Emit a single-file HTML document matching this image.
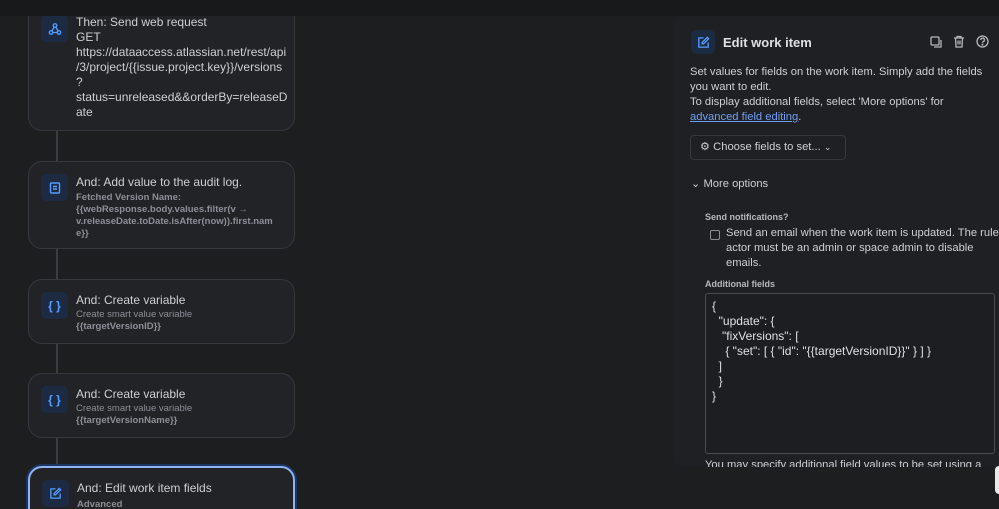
<!DOCTYPE html>
<html><head><meta charset="utf-8"><style>
*{box-sizing:border-box;margin:0;padding:0}
html{width:999px;height:509px;overflow:hidden}
body{width:999px;height:509px;overflow:hidden;background:#1d1e20;font-family:"Liberation Sans",sans-serif;color:#cecfd2;position:relative}
.top{position:absolute;left:0;top:0;width:999px;height:16px;background:#18191b;z-index:5}
.line{position:absolute;left:56px;width:2px;background:#3b3d42}
.card{position:absolute;left:28px;width:267px;background:#222326;border:1px solid #36383d;border-radius:14px}
.ic{position:absolute;left:12px;top:12px;width:27px;height:27px;border-radius:5px;background:#1c2b41;color:#579dff;display:flex;align-items:center;justify-content:center;font-size:12px;font-weight:bold}
.t{position:absolute;left:47px;font-size:12px;color:#cecfd2}
.s{font-size:9.5px;color:#8c8f97;line-height:12px}
.b{font-weight:bold}
.panel{position:absolute;left:673px;top:16px;width:340px;height:451px;background:#1f2023;border-radius:10px;overflow:hidden}
.panel p{font-size:11.2px;line-height:15px;color:#cecfd2}
</style></head><body>
<div class="top"></div>
<div class="line" style="top:130px;height:32px"></div>
<div class="line" style="top:248px;height:32px"></div>
<div class="line" style="top:343px;height:31px"></div>
<div class="line" style="top:437px;height:30px"></div>

<div class="card" style="top:-20px;height:151px">
 <div class="ic" style="top:34px"><svg width="14" height="14" viewBox="0 0 16 16" fill="none" stroke="#579dff" stroke-width="1.5"><circle cx="8" cy="4" r="2"/><circle cx="3.5" cy="12" r="2"/><circle cx="12.5" cy="12" r="2"/><path d="M7 6 4.5 10M5.5 12h5M9 6l2.5 4"/></svg></div>
 <div class="t" style="top:34px;line-height:15px">Then: Send web request<br>GET<br>https://dataaccess.atlassian.net/rest/api<br>/3/project/{{issue.project.key}}/versions<br>?<br>status=unreleased&amp;&amp;orderBy=releaseD<br>ate</div>
</div>

<div class="card" style="top:161px;height:88px">
 <div class="ic"><svg width="12" height="12" viewBox="0 0 12 12" fill="none" stroke="#579dff" stroke-width="1.4"><rect x="1.5" y="1" width="9" height="10" rx="1"/><path d="M4 4.5h4M4 7h4"/></svg></div>
 <div class="t" style="top:13px">And: Add value to the audit log.<div class="s b" style="margin-top:3px">Fetched Version Name:<br>{{webResponse.body.values.filter(v →<br>v.releaseDate.toDate.isAfter(now)).first.nam<br>e}}</div></div>
</div>

<div class="card" style="top:279px;height:65px">
 <div class="ic">{ }</div>
 <div class="t" style="top:13px">And: Create variable<div class="s" style="margin-top:2px">Create smart value variable</div><div class="s b">{{targetVersionID}}</div></div>
</div>

<div class="card" style="top:373px;height:65px">
 <div class="ic">{ }</div>
 <div class="t" style="top:13px">And: Create variable<div class="s" style="margin-top:2px">Create smart value variable</div><div class="s b">{{targetVersionName}}</div></div>
</div>

<div class="card" style="top:466px;height:60px;border:2px solid #8fb4f0;box-shadow:0 0 0 2px #1c3461">
 <div class="ic"><svg width="13" height="13" viewBox="0 0 14 14" fill="none" stroke="#579dff" stroke-width="1.4"><path d="M7 2H2v10h10V7"/><path d="M11 1.5l1.5 1.5L7 8.5H5.5V7z"/></svg></div>
 <div class="t" style="top:13px">And: Edit work item fields<div class="s b" style="margin-top:4px">Advanced</div></div>
</div>

<div class="panel">
 <div style="position:absolute;left:18px;top:14px;width:24px;height:24px;border-radius:5px;background:#1c2b41;display:flex;align-items:center;justify-content:center"><svg width="13" height="13" viewBox="0 0 14 14" fill="none" stroke="#579dff" stroke-width="1.4"><path d="M7 2H2v10h10V7"/><path d="M11 1.5l1.5 1.5L7 8.5H5.5V7z"/></svg></div>
 <div style="position:absolute;left:50px;top:19px;font-size:13px;font-weight:bold;color:#dee0e3">Edit work item</div>
 <svg style="position:absolute;left:257px;top:20px" width="12" height="12" viewBox="0 0 12 12" fill="none" stroke="#b6b8bd" stroke-width="1.3"><rect x="1" y="1" width="8" height="8" rx="1"/><path d="M11 4v7H4"/></svg>
 <svg style="position:absolute;left:280px;top:19px" width="12" height="13" viewBox="0 0 12 13" fill="none" stroke="#b6b8bd" stroke-width="1.3"><path d="M1 3h10M4 3V1.5h4V3M2.5 3l.5 9h6l.5-9M5 5.5v4M7 5.5v4"/></svg>
 <svg style="position:absolute;left:303px;top:19px" width="13" height="13" viewBox="0 0 13 13" fill="none" stroke="#b6b8bd" stroke-width="1.3"><circle cx="6.5" cy="6.5" r="5.5"/><path d="M4.8 5a1.8 1.8 0 1 1 2.4 1.6c-.5.2-.7.6-.7 1.1"/><circle cx="6.5" cy="9.6" r=".4" fill="#b6b8bd"/></svg>
 <p style="position:absolute;left:17px;top:49px;width:296px">Set values for fields on the work item. Simply add the fields you want to edit.<br>To display additional fields, select 'More options' for<br><span style="color:#6f9ff5;text-decoration:underline">advanced field editing</span>.</p>
 <div style="position:absolute;left:17px;top:119px;width:156px;height:25px;border:1px solid #36383d;border-radius:4px;font-size:11.2px;line-height:23px;padding-left:9px;color:#cecfd2">⚙ Choose fields to set... <span style="font-size:9px">⌄</span></div>
 <div style="position:absolute;left:18px;top:161px;font-size:11.2px">⌄ More options</div>
 <div style="position:absolute;left:32px;top:196px;font-size:9px;color:#b6b8bd;font-weight:bold">Send notifications?</div>
 <div style="position:absolute;left:37px;top:214px;width:10px;height:10px;border:1px solid #8c8f97;border-radius:2px"></div>
 <p style="position:absolute;left:53px;top:210px;width:275px">Send an email when the work item is updated. The rule actor must be an admin or space admin to disable emails.</p>
 <div style="position:absolute;left:32px;top:263px;font-size:9px;color:#b6b8bd;font-weight:bold">Additional fields</div>
 <div style="position:absolute;left:32px;top:277px;width:290px;height:161px;border:1px solid #4a4c52;border-radius:3px;background:#1d1e21;padding:5px 6px;font-size:12px;line-height:15px;white-space:pre;color:#dee0e3">{
  "update": {
   "fixVersions": [
    { "set": [ { "id": "{{targetVersionID}}" } ] }
  ]
  }
}</div>
 <p style="position:absolute;left:32px;top:442px;width:300px">You may specify additional field values to be set using a</p>
</div>
<div style="position:absolute;left:995px;top:466px;width:10px;height:28px;background:#e8e8e8;border-radius:4px"></div>
</body></html>
